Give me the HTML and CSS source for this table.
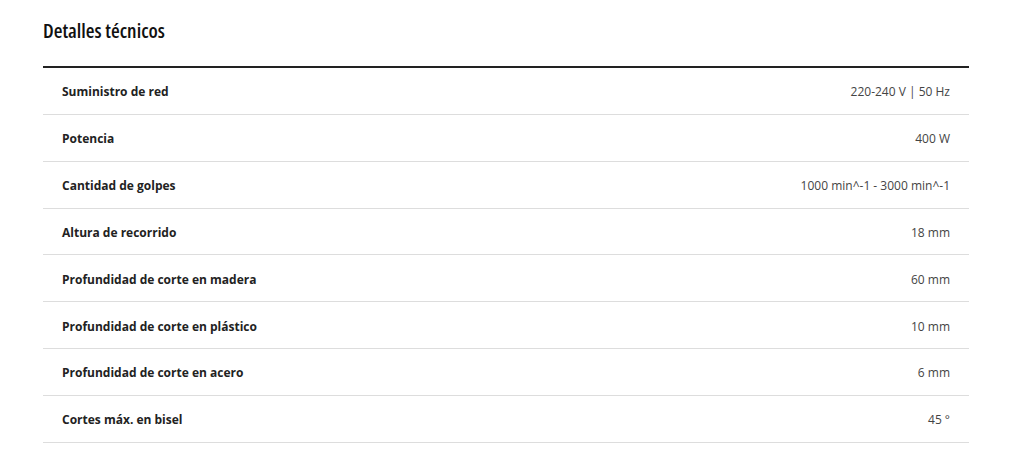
FILE: index.html
```html
<!DOCTYPE html>
<html lang="es">
<head>
<meta charset="utf-8">
<link rel="stylesheet" href="styles.css">
</head>
<body>
<section class="specs">
  <h2 class="specs-title">Detalles técnicos</h2>
  <div class="specs-table">
    <div class="row"><span class="label">Suministro de red</span><span class="value">220-240 V | 50 Hz</span></div>
    <div class="row"><span class="label">Potencia</span><span class="value">400 W</span></div>
    <div class="row"><span class="label">Cantidad de golpes</span><span class="value">1000 min^-1 - 3000 min^-1</span></div>
    <div class="row"><span class="label">Altura de recorrido</span><span class="value">18 mm</span></div>
    <div class="row"><span class="label">Profundidad de corte en madera</span><span class="value">60 mm</span></div>
    <div class="row"><span class="label">Profundidad de corte en plástico</span><span class="value">10 mm</span></div>
    <div class="row"><span class="label">Profundidad de corte en acero</span><span class="value">6 mm</span></div>
    <div class="row"><span class="label">Cortes máx. en bisel</span><span class="value">45 °</span></div>
  </div>
</section>
</body>
</html>
```
FILE: styles.css
```css
html, body {
  margin: 0;
  padding: 0;
  background: #fff;
}
body {
  font-family: "Open Sans", "Liberation Sans", sans-serif;
  color: #222;
}
.specs {
  padding: 18px 55px 0 43px;
}
.specs-title {
  margin: 0;
  font-size: 20px;
  line-height: 26px;
  font-weight: 600;
  font-stretch: 75%;
  color: #111;
  height: 48px;
}
.specs-table {
  border-top: 2px solid #222;
}
.row {
  display: flex;
  justify-content: space-between;
  align-items: center;
  height: 45.85px;
  padding: 2px 19px 0;
  box-sizing: content-box;
  border-bottom: 1px solid #ddd;
  font-size: 12px;
}
.row {
  height: 43.85px;
}
.label {
  font-weight: 700;
  color: #222;
}
.value {
  color: #444;
}
```
